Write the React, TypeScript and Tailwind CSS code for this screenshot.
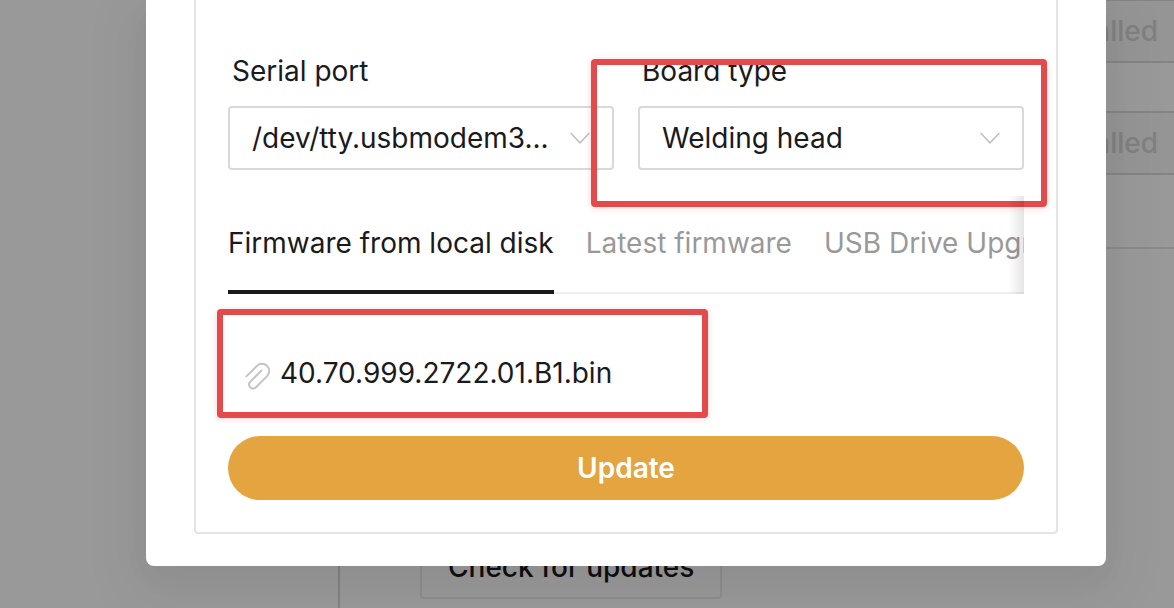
const tabs = ['Firmware from local disk', 'Latest firmware', 'USB Drive Upgrade'];

function PaperClip() {
  return (
    <svg
      viewBox="0 0 36 36"
      className="mt-1.5 size-9 shrink-0 fill-none stroke-[#c4c4c4]"
      strokeWidth="2"
      strokeLinecap="round"
    >
      <path d="M6.4 18.4 L16.9 7.9 A7.2 7.2 0 0 1 27.1 18.1 L15.5 29.7 A4 4 0 0 1 9.9 24.1 L21.4 12.6" />
    </svg>
  );
}

function SelectField({ id, label, value }: { id: string; label: string; value: string }) {
  return (
    <div>
      <label htmlFor={id} className="block pl-1 leading-11">
        {label}
      </label>
      <div className="relative mt-[13px]">
        <select
          id={id}
          className="block h-16 w-full appearance-none rounded-sm border-2 border-[#d9d9d9] bg-transparent pl-[22px] pr-14"
        >
          <option>{value}</option>
        </select>
        <svg
          viewBox="0 0 20 12"
          className="pointer-events-none absolute right-6 top-[26px] h-3 w-5 fill-none stroke-[#bfbfbf]"
          strokeWidth="1.5"
        >
          <path d="M0.6 1 L10 10.8 L19.4 1" />
        </svg>
      </div>
    </div>
  );
}

function InstalledButton() {
  return (
    <button
      disabled
      className="h-16 rounded-sm border-2 border-[#dcdcdc] bg-[#f9f9f9] px-[30px] font-medium text-[#d6d6d6]"
    >
      Installed
    </button>
  );
}

export default function App() {
  return (
    <div className="relative min-h-screen overflow-hidden bg-white font-['Inter',sans-serif] text-[28px] text-[#1a1a1d] [font-optical-sizing:none]">
      {/* Settings page behind the dialog */}
      <div className="flex min-h-screen">
        <aside className="w-[340px] shrink-0 border-r-2 border-[#d9d9d9]" />
        <main className="-mr-4 -mt-px flex-1">
          <div className="flex flex-col items-end gap-12">
            <InstalledButton />
            <InstalledButton />
          </div>
          <hr className="mt-18 border-t-2 border-[#e6e6e6]" />
          <button className="ml-20 mt-[286px] h-16 rounded-sm border-2 border-[#ececec] px-[26px] font-medium">
            Check for updates
          </button>
        </main>
      </div>

      {/* Firmware dialog */}
      <div className="absolute inset-0 bg-black/40 pl-[146px] pr-[68px]">
        <div
          role="dialog"
          className="rounded-b-lg bg-white px-12 pb-8 shadow-[0_12px_32px_rgba(0,0,0,0.03),0_18px_56px_16px_rgba(0,0,0,0.05)]"
        >
          <div className="rounded-b-sm border-2 border-t-0 border-[#e4e4e4] px-8 pb-8 pt-[49px]">
            <div className="grid grid-cols-2 gap-6">
              <SelectField id="port" label="Serial port" value="/dev/tty.usbmodem3..." />
              <div className="relative">
                <SelectField id="board" label="Board type" value="Welding head" />
                <div className="pointer-events-none absolute -bottom-[37px] -left-[47px] -right-[23px] top-2.5 rounded-sm border-6 border-[#e24a4b] shadow-[0_1px_6px_rgba(226,74,75,0.25)]" />
              </div>
            </div>

            <div className="relative mt-[26px] overflow-hidden">
              <div role="tablist" className="flex gap-8 border-b-2 border-[#f0f0f0]">
                {tabs.map((tab, i) => (
                  <button
                    key={tab}
                    role="tab"
                    aria-selected={i === 0}
                    className={
                      i === 0
                        ? '-mb-0.5 h-[98px] shrink-0 whitespace-nowrap border-b-4 border-[#1a1a1d]'
                        : 'h-24 shrink-0 whitespace-nowrap border-b-2 border-transparent text-[#999999]'
                    }
                  >
                    {tab}
                  </button>
                ))}
              </div>
              <div className="pointer-events-none absolute inset-y-0 right-0 w-4 bg-linear-to-l from-black/10 to-transparent" />
            </div>

            <div className="relative mt-[57px] flex h-11 items-center pl-3">
              <PaperClip />
              <span className="pl-1 leading-11">40.70.999.2722.01.B1.bin</span>
              <div className="pointer-events-none absolute -left-[11px] -top-[42px] h-[109px] w-[491px] rounded-sm border-6 border-[#e24a4b] shadow-[0_1px_6px_rgba(226,74,75,0.25)]" />
            </div>

            <button className="mt-[41px] block h-16 w-full rounded-full bg-[#e4a440] font-semibold text-white">
              Update
            </button>
          </div>
        </div>
      </div>
    </div>
  );
}
